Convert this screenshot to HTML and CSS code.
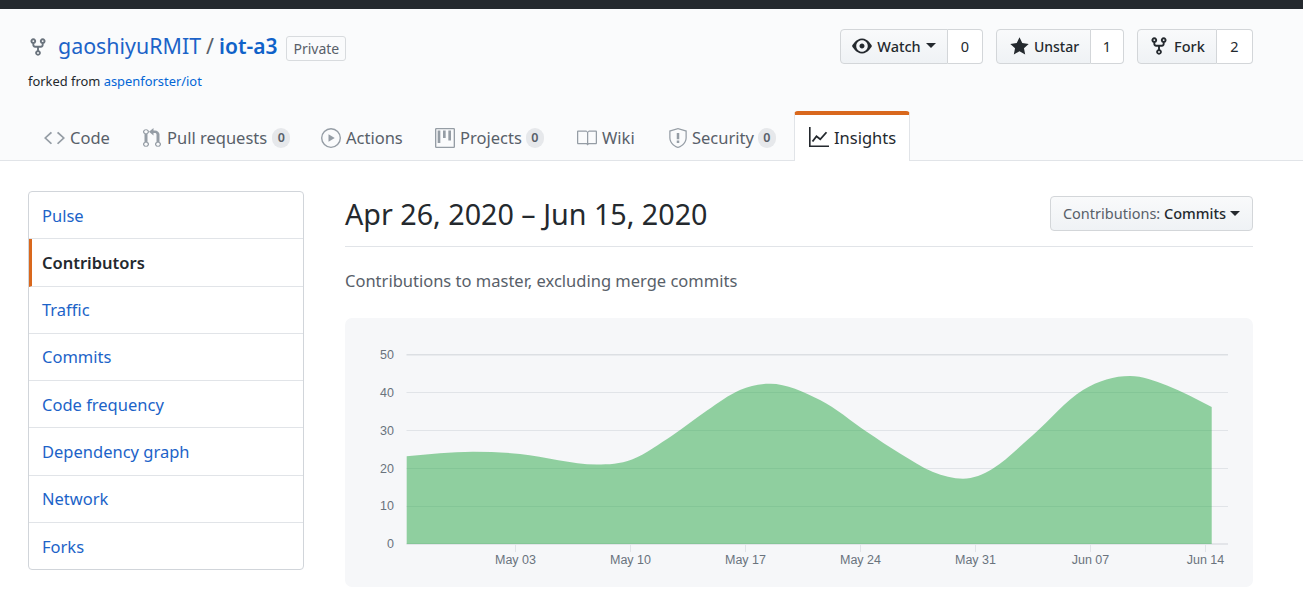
FILE: index.html
```html
<!DOCTYPE html>
<html lang="en">
<head>
    <meta charset="UTF-8">
    <meta name="viewport" content="width=device-width, initial-scale=1.0">
    <title>Contributors</title>
    <link rel="stylesheet" href="styles.css">
</head>
<body>
    <div class="topbar"></div>
    <header class="repohead">
        <div class="repohead-top">
            <div class="repo-info">
                <div class="repo-title">
                    <svg class="fork-icon" viewBox="0 0 16 16"><path fill-rule="evenodd" d="M5 3.25a.75.75 0 11-1.5 0 .75.75 0 011.5 0zm0 2.122a2.25 2.25 0 10-1.5 0v.878A2.25 2.25 0 005.75 8.5h1.5v2.128a2.251 2.251 0 101.5 0V8.5h1.5a2.25 2.25 0 002.25-2.25v-.878a2.25 2.25 0 10-1.5 0v.878a.75.75 0 01-.75.75h-4.5A.75.75 0 015 6.25v-.878zm3.75 7.378a.75.75 0 11-1.5 0 .75.75 0 011.5 0zm3-8.75a.75.75 0 100-1.5.75.75 0 000 1.5z"/></svg>
                    <a class="owner" href="#">gaoshiyuRMIT</a>
                    <span class="slash">/</span>
                    <a class="repo-name" href="#">iot-a3</a>
                    <span class="private-label">Private</span>
                </div>
                <div class="forked-from">forked from <a href="#">aspenforster/iot</a></div>
            </div>
            <div class="repo-actions">
                <div class="action-group">
                    <button class="action-btn watch-btn">
                        <svg class="eye-icon" viewBox="0 0 16 16"><path d="M8.06 2C3 2 0 8 0 8s3 6 8.06 6C13 14 16 8 16 8s-3-6-7.94-6zM8 12.6c-2.6 0-4.6-2.05-4.6-4.6 0-2.55 2-4.6 4.6-4.6 2.6 0 4.6 2.05 4.6 4.6 0 2.55-2 4.6-4.6 4.6zM10 8c0 1.11-.89 2-2 2-1.11 0-2-.89-2-2 0-1.11.89-2 2-2 1.11 0 2 .89 2 2z" fill-rule="evenodd"/></svg>
                        <span>Watch</span>
                        <span class="caret"></span>
                    </button>
                    <span class="action-count count-watch">0</span>
                </div>
                <div class="action-group">
                    <button class="action-btn star-btn">
                        <svg class="star-icon" viewBox="0 0 14 16"><path d="M14 6l-4.9-.64L7 1 4.9 5.36 0 6l3.6 3.26L2.67 14 7 11.67 11.33 14l-.93-4.74L14 6z"/></svg>
                        <span>Unstar</span>
                    </button>
                    <span class="action-count count-star">1</span>
                </div>
                <div class="action-group">
                    <button class="action-btn fork-btn">
                        <svg class="fork-small" viewBox="0 0 16 16"><path fill-rule="evenodd" d="M5 3.25a.75.75 0 11-1.5 0 .75.75 0 011.5 0zm0 2.122a2.25 2.25 0 10-1.5 0v.878A2.25 2.25 0 005.75 8.5h1.5v2.128a2.251 2.251 0 101.5 0V8.5h1.5a2.25 2.25 0 002.25-2.25v-.878a2.25 2.25 0 10-1.5 0v.878a.75.75 0 01-.75.75h-4.5A.75.75 0 015 6.25v-.878zm3.75 7.378a.75.75 0 11-1.5 0 .75.75 0 011.5 0zm3-8.75a.75.75 0 100-1.5.75.75 0 000 1.5z"/></svg>
                        <span>Fork</span>
                    </button>
                    <span class="action-count count-fork">2</span>
                </div>
            </div>
        </div>
        <nav class="tabs">
            <a class="tab tab-code" href="#">
                <svg class="tab-icon" width="21" height="20" viewBox="0 0 14 16" preserveAspectRatio="none"><path d="M9.5 3L8.6 3.9 12.4 8 8.6 12.1l.9.9L14 8 9.5 3zm-5 0L0 8l4.5 5 .9-.9L1.6 8l3.8-4.1L4.5 3z"/></svg>
                Code
            </a>
            <a class="tab tab-pulls" href="#">
                <svg class="tab-icon" width="18" height="20" viewBox="0 0 12 16" preserveAspectRatio="none"><path d="M11 11.28V5c-.03-.78-.34-1.47-.94-2.06C9.46 2.35 8.78 2.03 8 2H7V0L4 3l3 3V4h1c.27.02.48.11.69.31.21.2.3.42.31.69v6.28A1.993 1.993 0 0 0 10 15a1.993 1.993 0 0 0 1-3.72zm-1 2.92c-.66 0-1.2-.55-1.2-1.2 0-.65.55-1.2 1.2-1.2.65 0 1.2.55 1.2 1.2 0 .65-.55 1.2-1.2 1.2zM4 3c0-1.11-.89-2-2-2a1.993 1.993 0 0 0-1 3.72v6.56A1.993 1.993 0 0 0 2 15a1.993 1.993 0 0 0 1-3.72V4.72c.59-.34 1-.98 1-1.72zm-.8 10c0 .66-.55 1.2-1.2 1.2-.65 0-1.2-.55-1.2-1.2 0-.65.55-1.2 1.2-1.2.65 0 1.2.55 1.2 1.2zM2 4.2C1.34 4.2.8 3.65.8 3c0-.65.55-1.2 1.2-1.2.65 0 1.2.55 1.2 1.2 0 .65-.55 1.2-1.2 1.2z"/></svg>
                Pull requests <span class="counter">0</span>
            </a>
            <a class="tab tab-actions" href="#">
                <svg class="tab-icon" width="20" height="20" viewBox="0 0 16 16"><path fill-rule="evenodd" d="M8 0a8 8 0 1 1 0 16A8 8 0 0 1 8 0zm0 1.1a6.9 6.9 0 1 0 0 13.8A6.9 6.9 0 0 0 8 1.1zM6 5l5 3-5 3V5z"/></svg>
                Actions
            </a>
            <a class="tab tab-projects" href="#">
                <svg class="tab-icon" width="20" height="20" viewBox="0 0 15 16" preserveAspectRatio="none"><path fill-rule="evenodd" d="M14 0H1a1 1 0 0 0-1 1v14a1 1 0 0 0 1 1h13a1 1 0 0 0 1-1V1a1 1 0 0 0-1-1zM1 1h13v14H1V1zm1 1h2v10H2V2zm4 0h2v6H6V2zm4 0h2v8h-2V2z"/></svg>
                Projects <span class="counter">0</span>
            </a>
            <a class="tab tab-wiki" href="#">
                <svg class="tab-icon" width="20" height="20" viewBox="0 0 16 16"><path fill-rule="evenodd" d="M16 3v9c0 .55-.45 1-1 1H9.5l-1 1-1-1H1c-.55 0-1-.45-1-1V3c0-.55.45-1 1-1h6.5l1 1 1-1H15c.55 0 1 .45 1 1zM8 3.5L7.5 3H1v9h7V3.5zM15 3H9.5l-.5.5V12h6V3z"/></svg>
                Wiki
            </a>
            <a class="tab tab-security" href="#">
                <svg class="tab-icon" width="18" height="20" viewBox="0 0 14 16"><path fill-rule="evenodd" d="M7 0L0 2v6.02C0 12.69 5.31 16 7 16c1.69 0 7-3.31 7-7.98V2L7 0zm6 8.02C13 11.9 8.5 15 7 15S1 11.9 1 8.02V2.75L7 1l6 1.75v5.27zM6 4h2v5H6V4zm0 6h2v2H6v-2z"/></svg>
                Security <span class="counter">0</span>
            </a>
            <a class="tab tab-insights selected" href="#">
                <svg class="tab-icon" width="20" height="20" viewBox="0 0 16 16"><path d="M0 0h1.3v14.7H16V16H0V0z"/><path d="M2.8 11.6L6 7.4l3 2.4 5-5.6" fill="none" stroke="#24292e" stroke-width="1.5"/></svg>
                Insights
            </a>
        </nav>
    </header>

    <div class="content">
        <nav class="side-menu">
            <a class="side-item" href="#">Pulse</a>
            <a class="side-item selected" href="#">Contributors</a>
            <a class="side-item" href="#">Traffic</a>
            <a class="side-item" href="#">Commits</a>
            <a class="side-item" href="#">Code frequency</a>
            <a class="side-item" href="#">Dependency graph</a>
            <a class="side-item" href="#">Network</a>
            <a class="side-item" href="#">Forks</a>
        </nav>
        <main class="main">
            <div class="subhead">
                <h2>Apr 26, 2020 &ndash; Jun 15, 2020</h2>
                <button class="select-btn">
                    <span><span class="muted">Contributions:</span> Commits</span>
                    <span class="caret"></span>
                </button>
            </div>
            <p class="note">Contributions to master, excluding merge commits</p>
            <div class="graph-box">
                <svg class="graph" width="908" height="269" viewBox="345 318 908 269">
                    <g class="grid">
                        <line class="grid-top" x1="406.5" y1="354.7" x2="1228" y2="354.7"/>
                        <line x1="406.5" y1="392.5" x2="1228" y2="392.5"/>
                        <line x1="406.5" y1="430.5" x2="1228" y2="430.5"/>
                        <line x1="406.5" y1="468.5" x2="1228" y2="468.5"/>
                        <line x1="406.5" y1="506.5" x2="1228" y2="506.5"/>
                        <line class="grid-top" x1="406.5" y1="544" x2="1228" y2="544"/>
                        <line x1="515.5" y1="544" x2="515.5" y2="552"/>
                        <line x1="630.5" y1="544" x2="630.5" y2="552"/>
                        <line x1="745.5" y1="544" x2="745.5" y2="552"/>
                        <line x1="860.5" y1="544" x2="860.5" y2="552"/>
                        <line x1="975.5" y1="544" x2="975.5" y2="552"/>
                        <line x1="1090.5" y1="544" x2="1090.5" y2="552"/>
                        <line x1="1205.5" y1="544" x2="1205.5" y2="552"/>
                    </g>
                    <path class="area" d="M406.7 456.3C428.8 454.3 450.9 451.7 473 451.7C488.7 451.7 504.3 452.4 520 454C545.6 456.6 571.1 464.5 596.7 464.5C608.5 464.5 620.2 464.1 632 459.5C645.7 454.2 659.3 443.9 673 435C684.3 427.6 695.7 418.1 707 410.5C718 403.1 729 394.7 740 390C750 385.8 760 383.7 770 383.7C786.7 383.7 803.3 391.7 820 400C835.6 407.7 851.1 421.3 866.7 431.7C877.8 439.1 888.9 446.8 900 453.5C911 460.2 922 467.6 933 472C943 476 953 478.7 963 478.7C973 478.7 983 474.7 993 468.5C1006.3 460.2 1019.7 446.6 1033 435C1049.7 420.4 1066.3 400.2 1083 390C1098.7 380.5 1114.3 376 1130 376C1142.3 376 1154.7 380.8 1167 385.5C1181.9 391.1 1196.8 399.5 1211.7 407L1211.7 544L406.7 544Z"/>
                    <g class="y-labels">
                        <text x="394" y="359">50</text>
                        <text x="394" y="397">40</text>
                        <text x="394" y="435">30</text>
                        <text x="394" y="472.5">20</text>
                        <text x="394" y="510">10</text>
                        <text x="394" y="547.5">0</text>
                    </g>
                    <g class="x-labels">
                        <text x="515.5" y="564">May 03</text>
                        <text x="630.5" y="564">May 10</text>
                        <text x="745.5" y="564">May 17</text>
                        <text x="860.5" y="564">May 24</text>
                        <text x="975.5" y="564">May 31</text>
                        <text x="1090.5" y="564">Jun 07</text>
                        <text x="1205.5" y="564">Jun 14</text>
                    </g>
                </svg>
            </div>
        </main>
    </div>
</body>
</html>
```

FILE: styles.css
```css
* {
    box-sizing: border-box;
}

body {
    margin: 0;
    background: #fff;
    color: #24292e;
    font-family: "Noto Sans", "Open Sans", sans-serif;
    font-size: 16.5px;
    overflow: hidden;
}

a {
    color: #0366d6;
    text-decoration: none;
}

button {
    font-family: inherit;
}

.topbar {
    height: 9px;
    background: #24292e;
}

.repohead {
    height: 152px;
    background: #fafbfc;
    border-bottom: 1px solid #e1e4e8;
    padding: 0 50px 0 28px;
    display: flex;
    flex-direction: column;
    justify-content: space-between;
}

.repohead-top {
    display: flex;
    justify-content: space-between;
    padding-top: 20px;
}

.repo-title {
    display: flex;
    align-items: center;
    height: 35px;
    font-size: 21.4px;
    white-space: nowrap;
}

.fork-icon {
    width: 20px;
    height: 20px;
    margin: 0 10px 0 0;
    fill: #6a737d;
}

.owner {
    color: #1c63c8;
    margin-top: -2px;
}

.slash {
    color: #586069;
    margin: -2px 5px 0;
}

.repo-name {
    font-size: 21px;
    font-weight: 600;
    color: #0f62c9;
    margin-top: -2px;
}

.private-label {
    margin: 3px 0 0 9px;
    height: 25px;
    padding: 0 6px;
    border: 1px solid #d8dbde;
    border-radius: 3px;
    font-size: 14px;
    line-height: 23px;
    color: #586069;
}

.forked-from {
    margin-top: 8px;
    font-size: 12.9px;
    line-height: 18px;
}

.repo-actions {
    display: flex;
    gap: 13px;
}

.action-group {
    display: flex;
    height: 35px;
}

.action-btn {
    display: flex;
    align-items: center;
    justify-content: center;
    gap: 5px;
    padding: 0 0 2px;
    border: 1px solid #d3d6d9;
    border-radius: 4px 0 0 4px;
    background: linear-gradient(#f9fafb, #eff2f5);
    color: #24292e;
    font-size: 14.5px;
    font-weight: 500;
}

.watch-btn { width: 108px; }
.star-btn { width: 95px; padding: 0 0 1px 2px; font-size: 14px; }
.fork-btn { width: 80px; }

.eye-icon {
    width: 20px;
    height: 20px;
    fill: #24292e;
}

.star-icon {
    width: 19px;
    height: 21px;
    fill: #24292e;
}

.fork-small {
    width: 20px;
    height: 20px;
    fill: #24292e;
}

.action-count {
    display: flex;
    align-items: center;
    justify-content: center;
    padding-bottom: 2px;
    border: 1px solid #d3d6d9;
    border-left: 0;
    border-radius: 0 4px 4px 0;
    background: #fff;
    font-size: 14.5px;
}

.count-watch { width: 35px; }
.count-star { width: 33px; }
.count-fork { width: 36px; }

.caret {
    display: inline-block;
    border: 5px solid transparent;
    border-top-color: #24292e;
    border-bottom: 0;
}

.tabs {
    display: flex;
    align-items: flex-end;
    margin-bottom: -1px;
    height: 50px;
}

.tab {
    display: flex;
    align-items: center;
    gap: 5px;
    height: 50px;
    padding-top: 3px;
    color: #586069;
    font-size: 16.5px;
    white-space: nowrap;
}

.tab-icon {
    fill: #959da5;
    flex: none;
}

.tab-code { margin-left: 16px; width: 99px; }
.tab-pulls { width: 178px; gap: 6px; }
.tab-actions { width: 114px; }
.tab-projects { width: 142px; }
.tab-wiki { width: 92px; }
.tab-security { width: 125px; }

.tab.selected {
    width: 116px;
    height: 50px;
    padding: 0 0 2px 14px;
    color: #24292e;
    background: #fff;
    border: 1px solid #e1e4e8;
    border-top: 4px solid #d9681d;
    border-bottom: 0;
    border-radius: 4px 4px 0 0;
}

.tab.selected .tab-icon {
    fill: #24292e;
}

.counter {
    display: inline-block;
    min-width: 18px;
    height: 20px;
    padding: 0 5px;
    margin-left: -1px;
    border-radius: 10px;
    background: #e6e8eb;
    color: #586069;
    font-size: 12.5px;
    font-weight: 600;
    line-height: 20px;
    text-align: center;
}

.content {
    display: flex;
    padding: 30px 50px 0 28px;
}

.side-menu {
    flex: none;
    width: 276px;
    height: 379px;
    margin-right: 41px;
    border: 1px solid #d1d5da;
    border-radius: 4px;
    background: #fff;
    overflow: hidden;
}

.side-item {
    display: flex;
    align-items: center;
    height: 47.25px;
    padding-left: 13px;
    border-bottom: 1px solid #e1e4e8;
    color: #1c63c8;
    font-size: 16.5px;
}

.side-item:last-child {
    border-bottom: 0;
}

.side-item.selected {
    color: #24292e;
    font-weight: 600;
    padding-left: 10px;
    border-left: 3px solid #d9681d;
}

.main {
    flex: 1;
    min-width: 0;
}

.subhead {
    display: flex;
    justify-content: space-between;
    align-items: flex-start;
    height: 56px;
    padding-top: 5px;
    border-bottom: 1px solid #e1e4e8;
}

.subhead h2 {
    margin: -1px 0 0;
    font-size: 28.7px;
    font-weight: 400;
    line-height: 38px;
}

.select-btn {
    display: flex;
    align-items: center;
    justify-content: center;
    gap: 4px;
    height: 35px;
    width: 203px;
    padding: 0 0 1px;
    border: 1px solid #d3d6d9;
    border-radius: 4px;
    background: linear-gradient(#f9fafb, #eff2f5);
    color: #24292e;
    font-size: 14.5px;
    font-weight: 500;
}

.muted {
    color: #586069;
    font-weight: 400;
}

.note {
    margin: 22px 0 26px;
    color: #586069;
    font-size: 16.5px;
    line-height: 23px;
}

.graph-box {
    height: 269px;
    border-radius: 7px;
    background: #f6f7f9;
}

.graph {
    display: block;
}

.grid line {
    stroke: #e1e4e8;
    stroke-width: 1;
}

.grid .grid-top {
    stroke: #dcdfe3;
    stroke-width: 1.5;
}

.area {
    fill: #28a745;
    fill-opacity: 0.5;
}

.graph text {
    font-family: "Liberation Sans", Arial, sans-serif;
    font-size: 12.5px;
    fill: #6a737d;
}

.y-labels text {
    text-anchor: end;
}

.x-labels text {
    text-anchor: middle;
}
```
